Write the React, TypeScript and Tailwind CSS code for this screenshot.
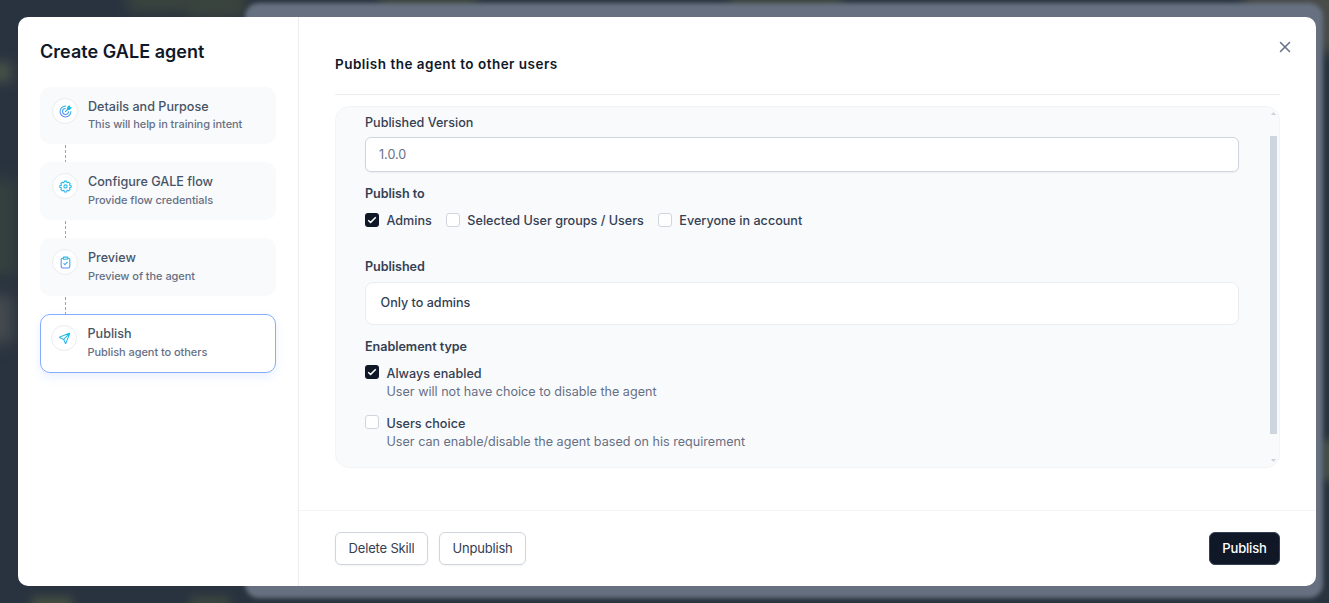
import React from "react";
import { X } from "lucide-react";

type StepIcon = "target" | "gear" | "clipboard" | "send";
interface Step {
  title: string;
  note: string;
  icon: StepIcon;
}

const steps: Step[] = [
  { title: "Details and Purpose", note: "This will help in training intent", icon: "target" },
  { title: "Configure GALE flow", note: "Provide flow credentials", icon: "gear" },
  { title: "Preview", note: "Preview of the agent", icon: "clipboard" },
  { title: "Publish", note: "Publish agent to others", icon: "send" },
];

const iconPaths: Record<StepIcon, React.ReactNode> = {
  target: (
    <>
      <path d="M22 12A10 10 0 1 1 12 2" />
      <path d="M17.500 12.500A5.500 5.500 0 1 1 11.500 6.500" />
      <path d="M12 12l5-5" />
      <path d="M16 8V4.500L19 1.500l1 2.500 2.500 1-3 3H16z" fill="#22b8e8" />
    </>
  ),
  gear: (
    <>
      <circle cx="12" cy="12" r="3" />
      <path d="M10 2h4l1 3 3-1 2.500 2.500-1 3 3 1v3l-3 1 1 3-2.500 2.500-3-1-1 3h-4l-1-3-3 1-2.500-2.500 1-3-3-1v-3l3-1-1-3L6 4l3 1z" />
    </>
  ),
  clipboard: (
    <>
      <path d="M16 4h1a3 3 0 0 1 3 3v12a3 3 0 0 1-3 3H7a3 3 0 0 1-3-3V7a3 3 0 0 1 3-3h1" />
      <rect x="8" y="2" width="8" height="4" rx="1" />
      <path d="M9 14l2 2 4.500-4.500" />
    </>
  ),
  send: <path d="M10.500 13.500L21 3M10.700 13.800l2.700 6.800c.3.6.9.6 1.200 0L21.500 3.200c.1-.5-.2-.8-.7-.7L3.400 9.400c-.6.3-.6.900 0 1.200z" />,
};

function GradientIcon({ name }: { name: StepIcon }) {
  return (
    <svg width="13" height="13" viewBox="0 0 24 24" fill="none" stroke={`url(#grad-${name})`} strokeWidth="2" strokeLinecap="round" strokeLinejoin="round">
      <defs>
        <linearGradient id={`grad-${name}`} gradientUnits="userSpaceOnUse" x1="18" y1="2" x2="5" y2="22">
          <stop stopColor="#18c4e4" />
          <stop offset="1" stopColor={name === "target" || name === "clipboard" ? "#6a86ff" : "#38acf2"} />
        </linearGradient>
      </defs>
      {iconPaths[name]}
    </svg>
  );
}

function StepCard({ step, index }: { step: Step; index: number }) {
  const active = index === 3;
  return (
    <div
      className={
        active
          ? "flex h-[59px] w-[236px] rounded-[10px] border border-[#84adff] bg-white pt-[10px] pl-[11px] shadow-[0_4px_10px_rgba(132,173,255,0.18)]"
          : index === 0
            ? "flex h-[57px] w-[236px] rounded-[10px] bg-[#f9fafb] pt-[11px] pl-3"
            : "flex h-[58px] w-[236px] rounded-[10px] bg-[#f9fafb] pt-[11px] pl-3"
      }
    >
      <div className={active ? "-ml-px flex size-[26px] shrink-0 items-center justify-center rounded-full border border-[#eaecf0] bg-white" : "flex size-[26px] shrink-0 items-center justify-center rounded-full border border-[#eaecf0] bg-white"}>
        <GradientIcon name={step.icon} />
      </div>
      <div className={active ? "ml-[10.5px]" : "ml-[10px]"}>
        <div className="text-[12.6px] leading-[18px] font-[450] text-[#475467]">{step.title}</div>
        <div className={index === 0 ? "-mt-px text-[11px] leading-[18px] font-[450] tracking-[-0.06px] text-[#667085]" : "text-[11px] leading-[18px] font-[450] tracking-[-0.06px] text-[#667085]"}>{step.note}</div>
      </div>
    </div>
  );
}

function Check({ checked }: { checked?: boolean }) {
  return checked ? (
    <span className="flex size-[14px] shrink-0 items-center justify-center rounded-[3px] bg-[#101828]">
      <svg width="10" height="8" viewBox="0 0 10 8" fill="none" stroke="#fff" strokeWidth="1.5">
        <path d="M1.200 4.200l2.400 2.200L8.800 1.200" />
      </svg>
    </span>
  ) : (
    <span className="block size-[14px] shrink-0 rounded-[3px] border border-[#d0d5dd] bg-white" />
  );
}

function Backdrop() {
  return (
    <div className="absolute inset-0 overflow-hidden bg-[#29333f]">
      <div className="absolute -top-3 left-32 h-6 w-28 bg-[#3a443e] blur-[7px]" />
      <div className="absolute -top-1 left-[190px] h-5 w-14 bg-[#3a443e] blur-[7px]" />
      <div className="absolute top-[62px] -left-5 h-5 w-8 bg-[#465047] blur-[6px]" />
      <div className="absolute top-[180px] -left-3 h-24 w-7 bg-[#35413f] blur-[8px]" />
      <div className="absolute top-[295px] -left-3 h-12 w-6 bg-[#474d50] blur-[8px]" />
      <div className="absolute top-[597px] left-8 h-4 w-10 bg-[#465043] blur-[5px]" />
      <div className="absolute top-[597px] left-[190px] h-3 w-10 bg-[#3d483f] blur-[5px]" />
      <div className="absolute -top-2 left-[380px] h-4 w-24 bg-[#3d463e] blur-[5px]" />
      <div className="absolute -top-2 left-[730px] h-4 w-28 bg-[#3d463e] blur-[5px]" />
      <div className="absolute -top-3 -right-3 h-16 w-24 bg-[#4a4c4a] blur-[7px]" />
      <div className="absolute top-[440px] -right-2 h-10 w-4 bg-[#475048] blur-[4px]" />
      <div className="absolute top-[3px] left-[245px] h-[595px] w-[1078px] rounded-[14px] bg-[#667080] blur-[2px]" />
    </div>
  );
}

export default function App() {
  return (
    <div className="relative h-[603px] w-[1329px] overflow-hidden pt-[17px] pl-[18px] font-['Inter',sans-serif]">
      <Backdrop />
      <div className="relative flex h-[569px] w-[1298px] overflow-hidden rounded-[10px] bg-white">
        <aside className="w-[281px] shrink-0 border-r border-[#eaecf0] pt-[22px] pl-[22px]">
          <h1 className="text-[18px] leading-[26px] font-semibold tracking-[0.04px] text-[#101828]">Create GALE agent</h1>
          <div className="mt-[22px]">
            {steps.map((step, i) => (
              <React.Fragment key={step.title}>
                <StepCard step={step} index={i} />
                {i < 3 && (
                  <svg className="ml-[25px] block" width="1" height="18">
                    <path d="M.5 1V18" stroke="#98a2b3" strokeDasharray="3 2" />
                  </svg>
                )}
              </React.Fragment>
            ))}
          </div>
        </aside>
        <main className="flex flex-1 flex-col">
          <div className="mr-9 ml-9 flex h-[78px] items-start justify-between border-b border-[#eaecf0]">
            <h2 className="mt-[37px] text-[13.5px] leading-5 font-semibold tracking-[0.48px] text-[#101828]">Publish the agent to other users</h2>
            <X className="mt-[21px] -mr-[13.5px] text-[#667085]" size={18} strokeWidth={2} />
          </div>
          <section className="mt-[11px] ml-9 flex h-[362px] w-[945px] justify-between overflow-hidden rounded-[14px] border border-[#f2f4f7] bg-[#f9fafb] text-[12.6px] leading-[18px] text-[#344054]">
            <div className="ml-[29px] w-[874px] pt-[7px]">
              <div className="font-[450]">Published Version</div>
              <div className="mt-[5px] flex h-[35px] items-center rounded-[6px] border border-[#d0d5dd] bg-white pt-px pl-[13px] text-[#667085] shadow-xs">1.0.0</div>
              <div className="mt-[13px] font-semibold tracking-[-0.05px]">Publish to</div>
              <div className="mt-[9px] flex items-start font-[450]">
                <div className="pt-px"><Check checked /></div>
                <span className="mr-[14px] ml-[7.5px]">Admins</span>
                <div className="pt-px"><Check /></div>
                <span className="mr-[14px] ml-[7.5px]">Selected User groups / Users</span>
                <div className="pt-px"><Check /></div>
                <span className="ml-[7.5px]">Everyone in account</span>
              </div>
              <div className="mt-7 font-semibold tracking-[-0.05px]">Published</div>
              <div className="mt-[6px] flex h-[43px] items-center rounded-[8px] border border-[#eaecf0] bg-white pb-px pl-[14.5px] font-[450]">Only to admins</div>
              <div className="mt-[13px] font-semibold tracking-[-0.05px]">Enablement type</div>
              <div className="mt-[9px] flex">
                <Check checked />
                <div className="ml-[7.5px]">
                  <div className="font-[450]">Always enabled</div>
                  <div className="text-[#667085]">User will not have choice to disable the agent</div>
                </div>
              </div>
              <div className="mt-[14px] flex">
                <Check />
                <div className="ml-[7.5px]">
                  <div className="font-[450]">Users choice</div>
                  <div className="text-[#667085]">User can enable/disable the agent based on his requirement</div>
                </div>
              </div>
            </div>
            <div className="mr-[2px] flex w-[7px] flex-col items-center pt-[5px]">
              <svg width="5" height="3" viewBox="0 0 5 3" fill="#cbd1da"><path d="M0 3L2.500 0 5 3z" /></svg>
              <div className="mt-[21px] h-[298px] w-[7px] bg-[#cdd5df]" />
              <svg className="mt-[25px]" width="5" height="3" viewBox="0 0 5 3" fill="#cbd1da"><path d="M0 0L2.500 3 5 0z" /></svg>
            </div>
          </section>
          <footer className="mt-auto flex h-[76px] items-start border-t border-[#f2f4f7] pt-[21px] pr-9 pl-9 text-[13px] tracking-[-0.18px] text-[#344054]">
            <button className="h-[33px] w-[93px] rounded-[6px] border border-[#d0d5dd] bg-white shadow-xs">Delete Skill</button>
            <button className="ml-[11px] h-[33px] w-[87px] rounded-[6px] border border-[#d0d5dd] bg-white shadow-xs">Unpublish</button>
            <button className="ml-auto h-[33px] w-[71px] rounded-[6px] border border-[#344054] bg-[#101828] font-medium text-white">Publish</button>
          </footer>
        </main>
      </div>
    </div>
  );
}
